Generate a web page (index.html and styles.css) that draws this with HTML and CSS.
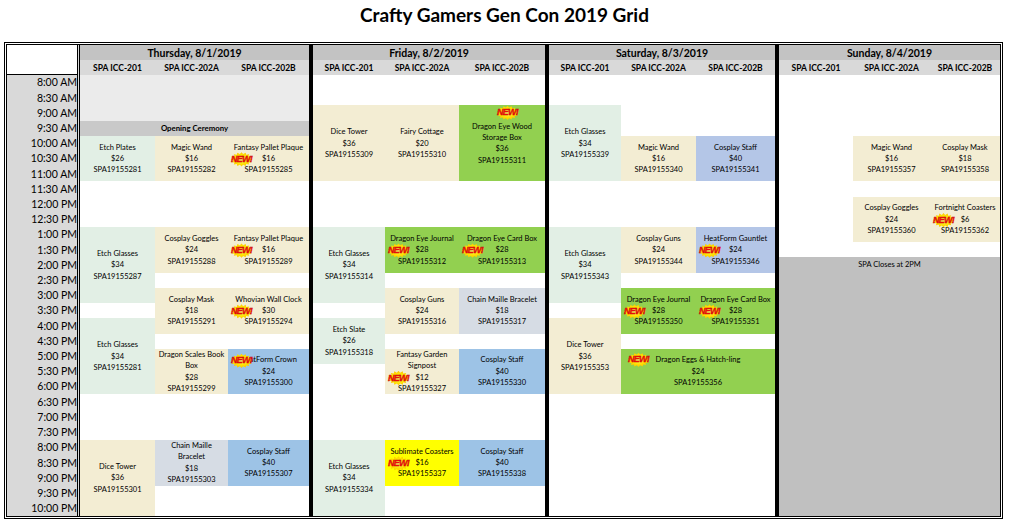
FILE: index.html
```html
<!DOCTYPE html>
<html>
<head>
<meta charset="utf-8">
<title>Crafty Gamers Gen Con 2019 Grid</title>
<link rel="stylesheet" href="styles.css">
</head>
<body>
<div class="title">Crafty Gamers Gen Con 2019 Grid</div>
<div class="sheet">
  <div class="times">
    <div class="corner"></div>
    <div class="tm">8:00 AM</div><div class="tm">8:30 AM</div><div class="tm">9:00 AM</div><div class="tm">9:30 AM</div>
    <div class="tm">10:00 AM</div><div class="tm">10:30 AM</div><div class="tm">11:00 AM</div><div class="tm">11:30 AM</div>
    <div class="tm">12:00 PM</div><div class="tm">12:30 PM</div><div class="tm">1:00 PM</div><div class="tm">1:30 PM</div>
    <div class="tm">2:00 PM</div><div class="tm">2:30 PM</div><div class="tm">3:00 PM</div><div class="tm">3:30 PM</div>
    <div class="tm">4:00 PM</div><div class="tm">4:30 PM</div><div class="tm">5:00 PM</div><div class="tm">5:30 PM</div>
    <div class="tm">6:00 PM</div><div class="tm">6:30 PM</div><div class="tm">7:00 PM</div><div class="tm">7:30 PM</div>
    <div class="tm">8:00 PM</div><div class="tm">8:30 PM</div><div class="tm">9:00 PM</div><div class="tm">9:30 PM</div>
    <div class="tm">10:00 PM</div>
  </div>

  <div class="day thu">
    <div class="dh">Thursday, 8/1/2019</div>
    <div class="rh">SPA ICC-201</div><div class="rh">SPA ICC-202A</div><div class="rh">SPA ICC-202B</div>
    <div class="ev am call t0 h3"></div>
    <div class="ev oc call t3 h1"><div>Opening Ceremony</div></div>
    <div class="ev etch c1 t4 h3"><div>Etch Plates</div><div>$26</div><div>SPA19155281</div></div>
    <div class="ev tan c2 t4 h3"><div>Magic Wand</div><div>$16</div><div>SPA19155282</div></div>
    <div class="ev tan c3 t4 h3"><div>Fantasy Pallet Plaque</div><div class="p"><span class="new">NEW!</span>$16</div><div>SPA19155285</div></div>
    <div class="ev etch c1 t10 h5"><div>Etch Glasses</div><div>$34</div><div>SPA19155287</div></div>
    <div class="ev tan c2 t10 h3"><div>Cosplay Goggles</div><div>$24</div><div>SPA19155288</div></div>
    <div class="ev tan c3 t10 h3"><div>Fantasy Pallet Plaque</div><div class="p"><span class="new">NEW!</span>$16</div><div>SPA19155289</div></div>
    <div class="ev tan c2 t14 h3"><div>Cosplay Mask</div><div>$18</div><div>SPA19155291</div></div>
    <div class="ev tan c3 t14 h3"><div>Whovian Wall Clock</div><div class="p"><span class="new">NEW!</span>$30</div><div>SPA19155294</div></div>
    <div class="ev etch c1 t16 h5"><div>Etch Glasses</div><div>$34</div><div>SPA19155281</div></div>
    <div class="ev tan c2 t18 h3"><div>Dragon Scales Book</div><div>Box</div><div>$28</div><div>SPA19155299</div></div>
    <div class="ev blu c3 t18 h3"><div class="p"><span class="new">NEW!</span>HeatForm Crown</div><div>$24</div><div>SPA19155300</div></div>
    <div class="ev tan c1 t24 h5"><div>Dice Tower</div><div>$36</div><div>SPA19155301</div></div>
    <div class="ev slate c2 t24 h3"><div>Chain Maille</div><div>Bracelet</div><div>$18</div><div>SPA19155303</div></div>
    <div class="ev blu c3 t24 h3"><div>Cosplay Staff</div><div>$40</div><div>SPA19155307</div></div>
  </div>

  <div class="day fri">
    <div class="dh">Friday, 8/2/2019</div>
    <div class="rh">SPA ICC-201</div><div class="rh">SPA ICC-202A</div><div class="rh">SPA ICC-202B</div>
    <div class="ev tan c1 t2 h5"><div>Dice Tower</div><div>$36</div><div>SPA19155309</div></div>
    <div class="ev tan c2 t2 h5"><div>Fairy Cottage</div><div>$20</div><div>SPA19155310</div></div>
    <div class="ev grn c3 t2 h5"><span class="new top">NEW!</span><div>Dragon Eye Wood</div><div>Storage Box</div><div>$36</div><div>SPA19155311</div></div>
    <div class="ev etch c1 t10 h5"><div>Etch Glasses</div><div>$34</div><div>SPA19155314</div></div>
    <div class="ev grn c2 t10 h3"><div>Dragon Eye Journal</div><div class="p"><span class="new">NEW!</span>$28</div><div>SPA19155312</div></div>
    <div class="ev grn c3 t10 h3"><div>Dragon Eye Card Box</div><div class="p"><span class="new">NEW!</span>$28</div><div>SPA19155313</div></div>
    <div class="ev tan c2 t14 h3"><div>Cosplay Guns</div><div>$24</div><div>SPA19155316</div></div>
    <div class="ev slate c3 t14 h3"><div>Chain Maille Bracelet</div><div>$18</div><div>SPA19155317</div></div>
    <div class="ev etch c1 t16 h3"><div>Etch Slate</div><div>$26</div><div>SPA19155318</div></div>
    <div class="ev tan c2 t18 h3"><div>Fantasy Garden</div><div>Signpost</div><div class="p"><span class="new">NEW!</span>$12</div><div>SPA19155327</div></div>
    <div class="ev blu c3 t18 h3"><div>Cosplay Staff</div><div>$40</div><div>SPA19155330</div></div>
    <div class="ev etch c1 t24 h5"><div>Etch Glasses</div><div>$34</div><div>SPA19155334</div></div>
    <div class="ev yel c2 t24 h3"><div>Sublimate Coasters</div><div class="p"><span class="new">NEW!</span>$16</div><div>SPA19155337</div></div>
    <div class="ev blu c3 t24 h3"><div>Cosplay Staff</div><div>$40</div><div>SPA19155338</div></div>
  </div>

  <div class="day sat">
    <div class="dh">Saturday, 8/3/2019</div>
    <div class="rh">SPA ICC-201</div><div class="rh">SPA ICC-202A</div><div class="rh">SPA ICC-202B</div>
    <div class="ev etch c1 t2 h5"><div>Etch Glasses</div><div>$34</div><div>SPA19155339</div></div>
    <div class="ev tan c2 t4 h3"><div>Magic Wand</div><div>$16</div><div>SPA19155340</div></div>
    <div class="ev lav c3 t4 h3"><div>Cosplay Staff</div><div>$40</div><div>SPA19155341</div></div>
    <div class="ev etch c1 t10 h5"><div>Etch Glasses</div><div>$34</div><div>SPA19155343</div></div>
    <div class="ev tan c2 t10 h3"><div>Cosplay Guns</div><div>$24</div><div>SPA19155344</div></div>
    <div class="ev lav c3 t10 h3"><div>HeatForm Gauntlet</div><div class="p"><span class="new">NEW!</span>$24</div><div>SPA19155346</div></div>
    <div class="ev grn c2 t14 h3"><div>Dragon Eye Journal</div><div class="p"><span class="new">NEW!</span>$28</div><div>SPA19155350</div></div>
    <div class="ev grn c3 t14 h3"><div>Dragon Eye Card Box</div><div class="p"><span class="new">NEW!</span>$28</div><div>SPA19155351</div></div>
    <div class="ev tan c1 t16 h5"><div>Dice Tower</div><div>$36</div><div>SPA19155353</div></div>
    <div class="ev grn c23 t18 h3"><div class="p"><span class="new wide">NEW!</span>Dragon Eggs &amp; Hatch-ling</div><div>$24</div><div>SPA19155356</div></div>
  </div>

  <div class="day sun">
    <div class="dh">Sunday, 8/4/2019</div>
    <div class="rh">SPA ICC-201</div><div class="rh">SPA ICC-202A</div><div class="rh">SPA ICC-202B</div>
    <div class="ev tan c2 t4 h3"><div>Magic Wand</div><div>$16</div><div>SPA19155357</div></div>
    <div class="ev tan c3 t4 h3"><div>Cosplay Mask</div><div>$18</div><div>SPA19155358</div></div>
    <div class="ev tan c2 t8 h3"><div>Cosplay Goggles</div><div>$24</div><div>SPA19155360</div></div>
    <div class="ev tan c3 t8 h3"><div>Fortnight Coasters</div><div class="p"><span class="new">NEW!</span>$6</div><div>SPA19155362</div></div>
    <div class="ev closed call t12 h17"><div>SPA Closes at 2PM</div></div>
  </div>
</div>
</body>
</html>
```

FILE: styles.css
```css
* { box-sizing: border-box; }

body {
  margin: 0;
  background: #fff;
  color: #000;
  font-family: Lato, "Open Sans", "DejaVu Sans", sans-serif;
}

.title {
  height: 42px;
  line-height: 30px;
  text-align: center;
  font-weight: 700;
  font-size: 19px;
}

.sheet {
  margin-left: 4px;
  width: 999px;
  height: 477px;
  border: 3px double #000;
  display: flex;
}

.times {
  width: 73px;
  flex: none;
  border-right: 3px double #000;
  background: #d9d9d9;
  display: grid;
  grid-template-rows: 30px repeat(29, 1fr);
}

.corner {
  background: #fff;
  border-bottom: 1px solid #000;
}

.tm {
  display: flex;
  align-items: center;
  justify-content: flex-end;
  font-size: 10.5px;
  line-height: 1;
  white-space: nowrap;
}

.day {
  flex: none;
  display: grid;
  grid-template-rows: 15px 15px repeat(29, 1fr);
  background: #fff;
}

.day + .day { border-left: 4px solid #000; }

.thu { width: 229px; grid-template-columns: 75px 73px 81px; }
.fri { width: 236px; grid-template-columns: 72px 74px 86px; }
.sat { width: 230px; grid-template-columns: 72px 75px 79px; }
.sun { width: 225px; grid-template-columns: 74px 77px 70px; }

.dh {
  grid-row: 1;
  grid-column: 1 / -1;
  background: #c3c3c3;
  display: flex;
  align-items: center;
  justify-content: center;
  font-weight: 700;
  font-size: 10.5px;
  white-space: nowrap;
}

.rh {
  grid-row: 2;
  background: #d9d9d9;
  display: flex;
  align-items: center;
  justify-content: center;
  font-weight: 700;
  font-size: 8.5px;
  white-space: nowrap;
}

/* placement */
.c1 { grid-column: 1; }
.c2 { grid-column: 2; }
.c3 { grid-column: 3; }
.c23 { grid-column: 2 / 4; }
.call { grid-column: 1 / 4; }

.t0 { grid-row-start: 3; }
.t2 { grid-row-start: 5; }
.t3 { grid-row-start: 6; }
.t4 { grid-row-start: 7; }
.t8 { grid-row-start: 11; }
.t10 { grid-row-start: 13; }
.t12 { grid-row-start: 15; }
.t14 { grid-row-start: 17; }
.t16 { grid-row-start: 19; }
.t18 { grid-row-start: 21; }
.t24 { grid-row-start: 27; }

.h1 { grid-row-end: span 1; }
.h3 { grid-row-end: span 3; }
.h5 { grid-row-end: span 5; }
.h17 { grid-row-end: span 17; }

/* events */
.ev {
  position: relative;
  display: flex;
  flex-direction: column;
  justify-content: center;
  align-items: stretch;
  text-align: center;
  font-size: 7.5px;
  line-height: 11.4px;
  white-space: nowrap;
  color: #000;
}

.p { position: relative; }

.tan { background: #f3edd3; }
.etch { background: #e2efe5; }
.grn { background: #92d050; }
.blu { background: #9dc3e6; }
.lav { background: #b4c6e7; }
.slate { background: #d6dce4; }
.yel { background: #ffff00; }
.am { background: #ebebeb; }
.oc { background: #c9c9c9; font-weight: 700; font-size: 7.8px; }
.closed {
  background: #c0c0c0;
  justify-content: flex-start;
  padding-top: 2px;
}

/* NEW! starburst */
.new {
  position: absolute;
  z-index: 1;
  left: 2px;
  top: 0;
  width: 23px;
  height: 13px;
  display: flex;
  align-items: center;
  justify-content: center;
  font-family: "Liberation Sans", Arial, sans-serif;
  font-style: italic;
  font-weight: 700;
  font-size: 9px;
  line-height: 1;
  letter-spacing: -0.8px;
  color: #ff1010;
  -webkit-text-stroke: 0.3px #b00000;
}

.new::before {
  content: "";
  position: absolute;
  inset: -1px 0;
  z-index: -1;
  background: radial-gradient(ellipse at center, #fffa70 0%, #ffe000 45%, #ffa000 100%);
  clip-path: polygon(97.7% 50%, 85.7% 57.3%, 94.1% 68.5%, 80.2% 70.4%, 83.6% 83.8%, 70.2% 80.4%, 68.2% 94.6%, 57% 85.8%, 50% 98%, 43% 85.8%, 31.8% 94.6%, 29.8% 80.4%, 16.4% 83.8%, 19.8% 70.4%, 5.9% 68.5%, 14.3% 57.3%, 2.3% 50%, 14.3% 42.7%, 5.9% 31.5%, 19.8% 29.6%, 16.4% 16.2%, 29.8% 19.6%, 31.8% 5.4%, 43% 14.2%, 50% 2%, 57% 14.2%, 68.2% 5.4%, 70.2% 19.6%, 83.6% 16.2%, 80.2% 29.6%, 94.1% 31.5%, 85.7% 42.7%);
}

.new.top { left: 37px; top: 1px; }
.new.wide { left: 6px; top: -1px; }
```
